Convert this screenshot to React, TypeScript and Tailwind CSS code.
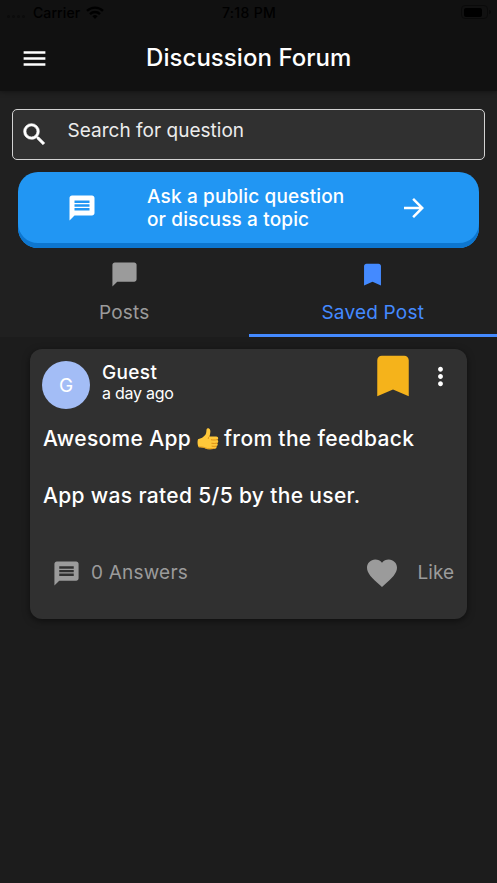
import type { ReactNode } from 'react'
import {
  MdArrowForward,
  MdBookmark,
  MdChatBubble,
  MdFavorite,
  MdMenu,
  MdMessage,
  MdMoreVert,
  MdSearch,
} from 'react-icons/md'

function StatusBar() {
  return (
    <div className="flex h-[24px] items-center text-[14px] font-medium text-black">
      <div className="flex flex-1 items-center pl-[7px]">
        <div className="flex gap-[2px] pt-[8px]">
          <span className="size-[3px] rounded-full bg-[#0c0c0c]" />
          <span className="size-[3px] rounded-full bg-[#0c0c0c]" />
          <span className="size-[3px] rounded-full bg-[#0c0c0c]" />
          <span className="size-[3px] rounded-full bg-[#0c0c0c]" />
        </div>
        <span className="ml-[8px] tracking-[0.1px]">Carrier</span>
        <svg viewBox="0 0 18 13" className="ml-[6px] h-[13px] w-[18px]" fill="none" stroke="#000" strokeWidth="2.4">
          <path d="M1 4.9a11.4 11.4 0 0 1 16 0" />
          <path d="M4 8.1a7.1 7.1 0 0 1 10 0" />
          <path d="M9 13 6.4 10.3a3.7 3.7 0 0 1 5.2 0Z" fill="#000" stroke="none" />
        </svg>
      </div>
      <span className="tracking-[0.3px]">7:18 PM</span>
      <div className="flex flex-1 items-center justify-end gap-[1px] pr-[6px]">
        <div className="flex h-[14px] w-[27px] items-center rounded-[4px] border border-[#0a0a0a] px-[2px]">
          <div className="h-[9px] w-[18px] rounded-[2px] bg-black" />
        </div>
        <div className="h-[4px] w-[2px] rounded-r-full bg-[#0a0a0a]" />
      </div>
    </div>
  )
}

function Header() {
  return (
    <header className="h-[91px] bg-[#111111] shadow-[0_1px_5px_rgba(0,0,0,0.4)]">
      <StatusBar />
      <div className="flex h-[68px] items-center pr-[19px] pl-[19.5px]">
        <MdMenu className="size-[29px]" />
        <h1 className="flex-1 text-center text-[24px] leading-[30px] font-medium tracking-[0.05px]">
          Discussion Forum
        </h1>
        <div className="w-[29px]" />
      </div>
    </header>
  )
}

function SearchField() {
  return (
    <div className="mx-[12px] mt-[18px] flex h-[51px] rounded-[5px] border-[1.5px] border-[#d2d2d2] bg-[#303030] pl-[6px]">
      <MdSearch className="mt-[9.5px] ml-[0.5px] size-[29px] [&_path:last-child]:stroke-white [&_path:last-child]:stroke-[0.5]" />
      <span className="mt-[9px] ml-[19px] text-[19px] leading-[24px] tracking-[0.02px] text-[#ececec]">
        Search for question
      </span>
    </div>
  )
}

function AskButton() {
  return (
    <button className="mx-[18px] mt-[12px] flex h-[76px] items-center rounded-[20px] bg-[#2196f3] pb-[5px] text-left shadow-[inset_0_-5px_0_#0d76cf]">
      <MdMessage className="ml-[49px] size-[30px]" />
      <span className="ml-[50px] w-[226px] pt-[2px] text-[19px] leading-[22.5px] font-medium tracking-[0.14px]">
        Ask a public question
        <br />
        or discuss a topic
      </span>
      <MdArrowForward className="ml-[26px] size-[30px]" />
    </button>
  )
}

function Tab({ icon, label, active }: { icon: ReactNode; label: string; active?: boolean }) {
  return (
    <div
      className={
        active
          ? 'flex h-[89px] flex-1 flex-col items-center border-b-[3px] border-[#448aff] pt-[12px] text-[#448aff]'
          : 'flex h-[89px] flex-1 flex-col items-center border-b-[3px] border-transparent pt-[12px] text-[#9b9b9b]'
      }
    >
      {icon}
      <span className="mt-[12px] text-[19px] leading-[24px] tracking-[0.2px]">{label}</span>
    </div>
  )
}

function ThumbsUp() {
  return (
    <svg viewBox="0 0 22 22" className="mr-[5px] ml-[6px] inline-block size-[22px]" role="img" aria-label="thumbs up">
      <path
        d="M1 11.2C4 10.6 6.6 9.2 8.4 6.8 9.7 4.9 9.2 2.6 9.6 1.2c.5-1.3 2.9-1.1 3.5.7.7 2-.1 4.3-.6 6.5h6.6c2.4 0 2.8 3 .9 3.4 1.7.5 1.6 3 0 3.4 1.2.6.9 2.8-.6 3 .6.9-.1 2.3-1.5 2.6-3.2.6-6.9.8-9.5-.4-1.9-.9-4.4-1-6.6-1.1C.4 17 .2 13.5 1 11.2Z"
        fill="#ffc83a"
      />
      <path
        d="M20 11.7c-2 .5-4.2.3-5.7.1M20 15.2c-1.8.4-3.6.3-5.2.1M19.4 18.2c-1.5.3-3.1.2-4.4 0M12.4 8.3c-.7.6-1.1 1.3-1.1 2.2"
        fill="none"
        stroke="#d98a12"
        strokeWidth="0.9"
        strokeLinecap="round"
      />
      <path
        d="M1.8 18.8c2.2.1 4.7.2 6.6 1.1 2.6 1.2 6.3 1 9.5.4"
        fill="none"
        stroke="#e39a1c"
        strokeWidth="1"
      />
    </svg>
  )
}

function PostCard() {
  return (
    <article className="mx-[30px] h-[270px] rounded-[12px] bg-[#303030] pt-[7px] shadow-[0_2px_7px_rgba(0,0,0,0.5)]">
      <div className="flex h-[56px] pl-[12px]">
        <div className="mt-[5px] flex size-[48px] items-center justify-center rounded-full bg-[#a3bdf6] pt-[2px] text-[19px]">
          G
        </div>
        <div className="ml-[12px] flex flex-1 flex-col pt-[5px]">
          <span className="text-[19px] leading-[23px] font-medium tracking-[0.35px]">Guest</span>
          <span className="text-[16px] leading-[18px] tracking-[-0.25px]">a day ago</span>
        </div>
        <MdBookmark className="-mt-[7px] size-[54px] text-[#f5b31b]" />
        <MdMoreVert className="mt-[6px] mr-[12px] ml-[6px] size-[29px]" />
      </div>
      <div className="mt-[13px] pl-[13px] text-[21px] leading-[28px] font-medium tracking-[0.34px] whitespace-nowrap">
        <p className="flex items-center">
          Awesome App
          <ThumbsUp />
          <span className="tracking-[0.34px]">from the feedback</span>
        </p>
        <p className="mt-[29px]">App was rated 5/5 by the user.</p>
      </div>
      <div className="mt-[45px] flex h-[36px] items-center pr-[13px] pl-[21.5px] text-[19px] leading-[24px] text-[#9b9b9b]">
        <MdMessage className="size-[29px]" />
        <span className="ml-[10.5px] flex-1 tracking-[0.2px]">0 Answers</span>
        <MdFavorite className="size-[36px]" />
        <span className="ml-[18px]">Like</span>
      </div>
    </article>
  )
}

export default function App() {
  return (
    <div className="flex h-[883px] w-[497px] flex-col overflow-hidden bg-[#1c1c1c] font-['Inter',sans-serif] text-white">
      <div className="flex h-[337px] flex-col bg-[#202020]">
        <Header />
        <SearchField />
        <AskButton />
        <div className="flex">
          <Tab icon={<MdChatBubble className="size-[29px]" />} label="Posts" />
          <Tab icon={<MdBookmark className="size-[29px]" />} label="Saved Post" active />
        </div>
      </div>
      <main className="pt-[12px]">
        <PostCard />
      </main>
    </div>
  )
}
